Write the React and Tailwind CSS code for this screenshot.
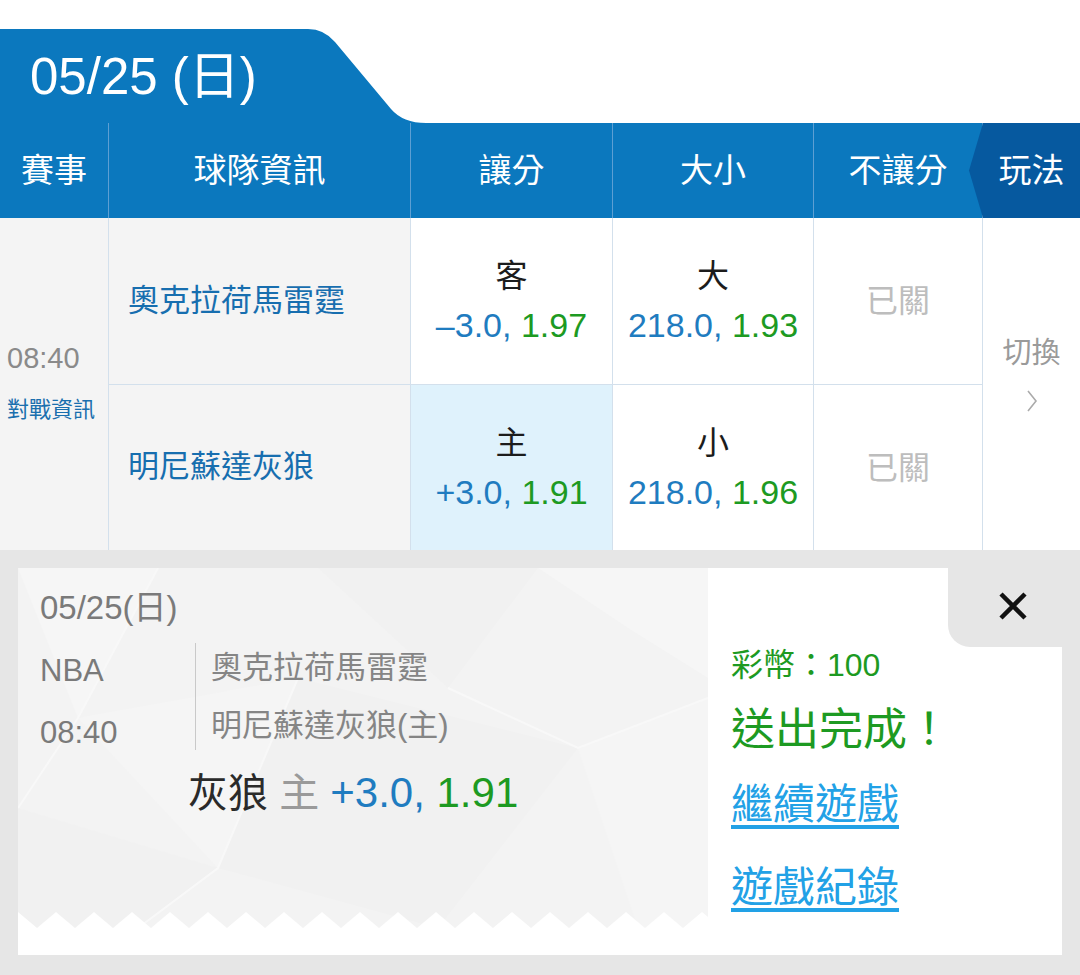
import React from "react";

const TEETH = Array.from({ length: 20 }, (_, i) => i * 38);

function HeadCell({ children, first }) {
  return (
    <div
      className={`flex items-center justify-center text-[33px] text-white ${
        first ? "" : "border-l border-[#5d9fd3]"
      }`}
    >
      {children}
    </div>
  );
}

function OddsCell({ label, line, price, selected, top }) {
  return (
    <div
      className={`flex flex-col items-center justify-center border-l border-[#d3e0ec] ${
        top ? "" : "border-t"
      } ${selected ? "bg-[#dff2fc]" : "bg-white"}`}
    >
      <div className="text-[32px] leading-[40px] text-[#1c1c1c]">{label}</div>
      <div className="mt-[8px] text-[34px] leading-[42px] whitespace-nowrap">
        <span className="text-[#1f7cc0]">{line}, </span>
        <span className="text-[#1d9a22]">{price}</span>
      </div>
    </div>
  );
}

function ClosedCell({ top }) {
  return (
    <div
      className={`flex items-center justify-center border-l border-[#d3e0ec] bg-white text-[32px] text-[#bdbdbd] ${
        top ? "" : "border-t"
      }`}
    >
      已關
    </div>
  );
}

function TeamCell({ name, top }) {
  return (
    <div
      className={`flex items-center border-l border-[#d3e0ec] bg-[#f4f4f4] pl-[19px] text-[31px] text-[#176eaf] ${
        top ? "" : "border-t"
      }`}
    >
      {name}
    </div>
  );
}

export default function App() {
  return (
    <div className="w-[1080px] h-[975px] overflow-hidden bg-white font-['Liberation_Sans','Noto_Sans_CJK_TC',sans-serif]">
      {/* date tab */}
      <div className="pt-[29px]">
        <div className="relative flex h-[94px] w-[440px] items-center pl-[30px]">
          <svg className="absolute inset-0" width="440" height="94" viewBox="0 0 440 94">
            <path d="M0 0 H308 Q324 0 335 13 L391 80 Q403 94 426 94 H0 Z" fill="#0b78be" />
          </svg>
          <span className="relative text-[51px] leading-none text-white">05/25 (日)</span>
        </div>
      </div>

      {/* header */}
      <div className="grid h-[95px] grid-cols-[108px_302px_202px_201px_169px_98px] bg-[#0b78be]">
        <HeadCell first>賽事</HeadCell>
        <HeadCell>球隊資訊</HeadCell>
        <HeadCell>讓分</HeadCell>
        <HeadCell>大小</HeadCell>
        <HeadCell>不讓分</HeadCell>
        <div className="relative flex items-center justify-center border-l border-[#5d9fd3] bg-[#06599f] text-[33px] text-white">
          <svg className="absolute -left-[15px] top-0" width="15" height="95" viewBox="0 0 15 95">
            <polygon points="15,0 1,47.5 15,95" fill="#06599f" />
          </svg>
          玩法
        </div>
      </div>

      {/* match rows */}
      <div className="grid grid-cols-[108px_302px_202px_201px_169px_98px] grid-rows-[166px_166px]">
        <div className="row-span-2 flex flex-col items-start justify-center bg-[#f4f4f4] pb-[4px] pl-[7px]">
          <div className="text-[29px] leading-[36px] text-[#8a8a8a]">08:40</div>
          <div className="mt-[20px] text-[22px] leading-[28px] text-[#1a6fae]">對戰資訊</div>
        </div>
        <TeamCell name="奧克拉荷馬雷霆" top />
        <OddsCell label="客" line="–3.0" price="1.97" top />
        <OddsCell label="大" line="218.0" price="1.93" top />
        <ClosedCell top />
        <div className="row-span-2 flex flex-col items-center justify-center border-l border-[#d3e0ec] bg-white pb-[20px]">
          <div className="text-[29px] leading-[36px] text-[#9a9a9a]">切換</div>
          <svg className="mt-[18px]" width="12" height="24" viewBox="0 0 12 24">
            <polyline points="2,2 10,12 2,22" fill="none" stroke="#ababab" strokeWidth="1.6" />
          </svg>
        </div>
        <TeamCell name="明尼蘇達灰狼" />
        <OddsCell label="主" line="+3.0" price="1.91" selected />
        <OddsCell label="小" line="218.0" price="1.96" />
        <ClosedCell />
      </div>

      {/* bet result */}
      <div className="h-[425px] bg-[#e6e6e6] px-[18px] pt-[18px]">
        <div className="flex h-[387px] bg-white">
          <div className="w-[690px]">
            <div className="relative h-[360px] overflow-hidden bg-[#f3f3f3]">
              <svg className="absolute inset-0" width="690" height="360" viewBox="0 0 690 360">
                <polygon points="0,0 140,0 60,150" fill="#f6f6f6" />
                <polygon points="300,0 520,0 430,120" fill="#f1f1f1" />
                <polygon points="520,0 690,0 690,110 610,60" fill="#f6f6f6" />
                <polygon points="60,150 280,110 200,300" fill="#f5f5f5" />
                <polygon points="280,110 560,180 420,360 200,300" fill="#f1f1f1" />
                <polygon points="560,180 690,130 690,360 620,360" fill="#f5f5f5" />
                <polygon points="0,240 200,300 120,360 0,360" fill="#f1f1f1" />
                <path d="M140 0 L60 150 L0 240 M280 110 L200 300 L120 360 M430 120 L560 180 L690 130" stroke="#f8f8f8" strokeWidth="2" fill="none" />
              </svg>
              <svg className="absolute bottom-0 left-0" width="690" height="16" viewBox="0 0 690 16">
                {TEETH.map((x) => (
                  <polygon key={x} points={`${x - 19},16 ${x},0 ${x + 19},16`} fill="#ffffff" />
                ))}
              </svg>
              <div className="relative pl-[22px] pt-[20px] text-[#7a7a7a]">
                <div className="text-[33px] leading-[40px]">05/25(日)</div>
                <div className="mt-[15px] flex items-start">
                  <div className="w-[155px] pt-[8px] text-[31px] leading-[40px]">
                    <div>NBA</div>
                    <div className="mt-[22px]">08:40</div>
                  </div>
                  <div className="border-l border-[#c9c9c9] pb-[4px] pl-[15px] pt-[5px] text-[31px] leading-[40px] text-[#858585]">
                    <div>奧克拉荷馬雷霆</div>
                    <div className="mt-[18px]">明尼蘇達灰狼(主)</div>
                  </div>
                </div>
                <div className="mt-[15px] pl-[148px] text-[40px] leading-[50px] whitespace-nowrap">
                  <span className="text-[#2a2a2a]">灰狼 </span>
                  <span className="text-[#9a9a9a]">主 </span>
                  <span className="text-[42px] text-[#1f7cc0]">+3.0, </span>
                  <span className="text-[42px] text-[#1d9a22]">1.91</span>
                </div>
              </div>
            </div>
          </div>
          <div className="relative flex-1 pl-[23px] pt-[77px]">
            <div className="absolute right-0 top-0 flex h-[79px] w-[114px] items-center justify-center rounded-bl-[22px] bg-[#e6e6e6] pl-[16px] pb-[4px]">
              <svg width="30" height="30" viewBox="0 0 30 30">
                <path d="M3 3 L27 27 M27 3 L3 27" stroke="#111" strokeWidth="4.5" />
              </svg>
            </div>
            <div className="text-[32px] leading-[40px] text-[#1d9a22]">彩幣：100</div>
            <div className="mt-[20px] text-[44px] leading-[50px] text-[#1d9a22]">送出完成！</div>
            <div className="mt-[25px] text-[42px] leading-[50px] text-[#22a1e6] underline underline-offset-[6px]">
              繼續遊戲
            </div>
            <div className="mt-[33px] text-[42px] leading-[50px] text-[#22a1e6] underline underline-offset-[6px]">
              遊戲紀錄
            </div>
          </div>
        </div>
      </div>
    </div>
  );
}
